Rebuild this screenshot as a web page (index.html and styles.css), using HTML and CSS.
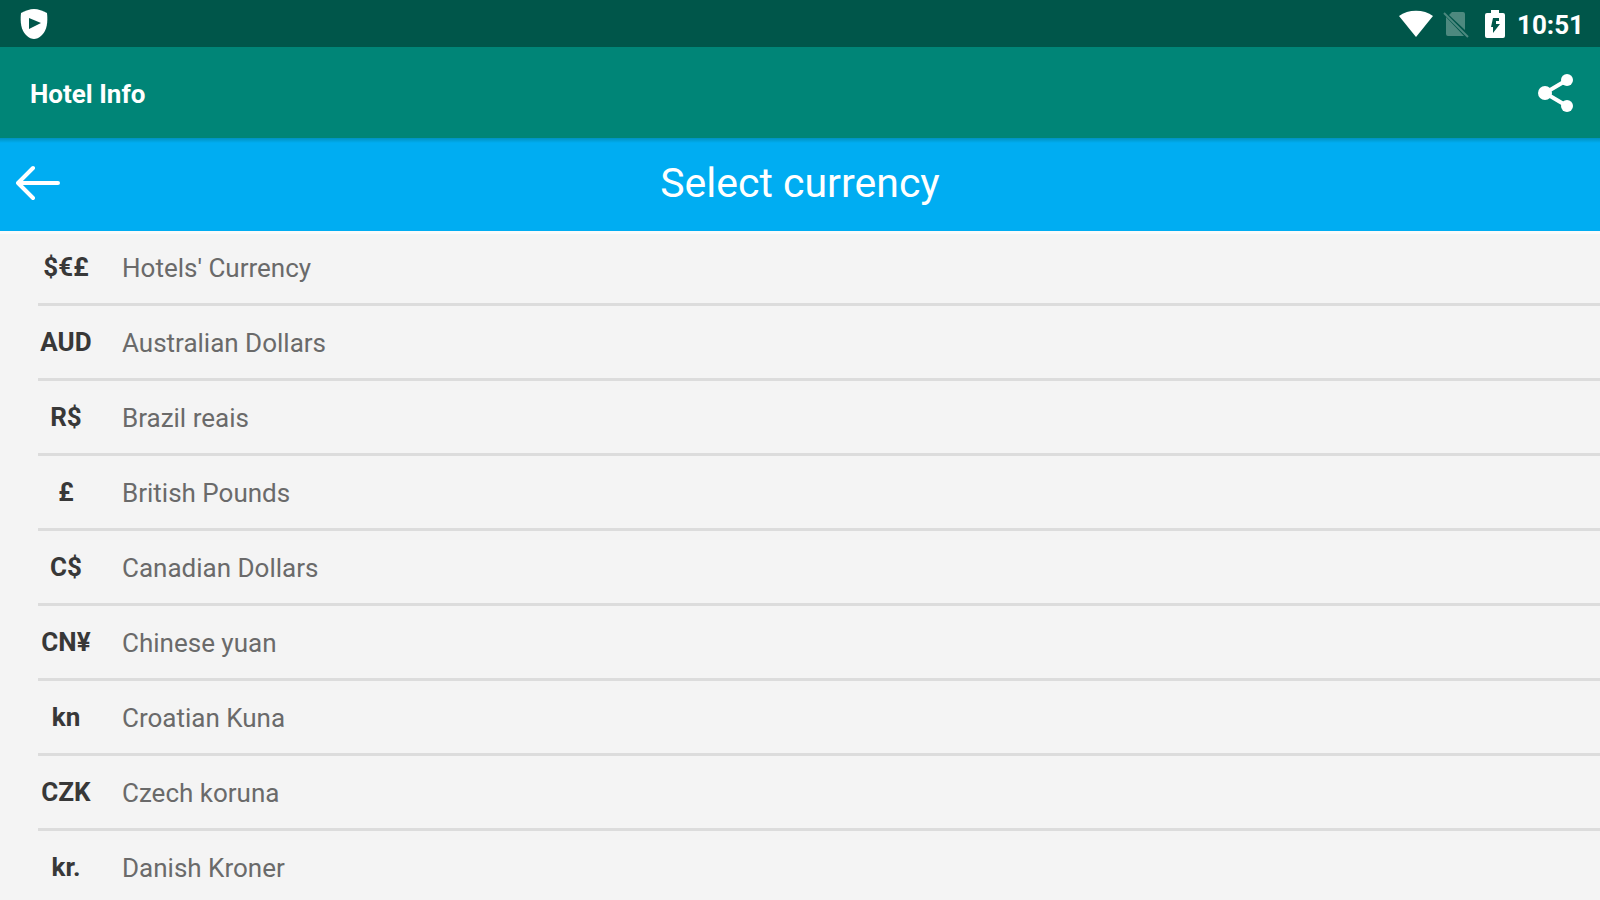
FILE: index.html
```html
<!DOCTYPE html>
<html lang="en">
<head>
    <meta charset="UTF-8">
    <meta name="viewport" content="width=device-width, initial-scale=1.0">
    <title>Hotel Info - Select currency</title>
    <link rel="stylesheet" href="styles.css">
</head>
<body>
    <div class="status-bar">
        <svg class="icon-shield" viewBox="0 0 28 32" aria-hidden="true">
            <path fill="#fff" d="M14 1 C18 1 23 3 27 5 C28 14 27 22 22 27 C19 30 16 31 14 31 C12 31 9 30 6 27 C1 22 0 14 1 5 C5 3 10 1 14 1 Z"/>
            <path fill="#00564a" d="M9 10 L21 15 L9 21 Z"/>
        </svg>
        <div class="status-icons">
            <svg class="icon-wifi" viewBox="0 0 34 28" aria-hidden="true">
                <path fill="#fff" d="M17 27 L0 6 C9 -1 25 -1 34 6 Z"/>
            </svg>
            <svg class="icon-sim" viewBox="0 0 26 28" aria-hidden="true">
                <path fill="#4d897f" d="M9 2 H20 Q22 2 22 4 V20 L6 5 Z M3 7 L21 26 H5 Q3 26 3 24 Z"/>
                <path stroke="#4d897f" stroke-width="2" d="M1 3 L25 27"/>
            </svg>
            <svg class="icon-battery" viewBox="0 0 20 30" aria-hidden="true">
                <path fill="#fff" d="M6 1 H14 V4 H18 Q20 4 20 6 V27 Q20 29 18 29 H2 Q0 29 0 27 V6 Q0 4 2 4 H6 Z"/>
                <path fill="#00564a" d="M8 9 H14 V12 H11 V15 H15 L8 24 V18 H6 Z"/>
            </svg>
            <span class="clock">10:51</span>
        </div>
    </div>

    <header class="app-bar">
        <h1 class="app-title">Hotel Info</h1>
        <button class="icon-button" type="button" aria-label="Share">
            <svg class="icon-share" viewBox="0 0 36 40" aria-hidden="true">
                <path fill="none" stroke="#fff" stroke-width="4" d="M29 7 L7 20 L29 33"/>
                <circle cx="29" cy="7" r="6" fill="#fff"/>
                <circle cx="7" cy="20" r="7" fill="#fff"/>
                <circle cx="29" cy="33" r="6" fill="#fff"/>
            </svg>
        </button>
    </header>

    <div class="page-bar">
        <button class="icon-button" type="button" aria-label="Back">
            <svg class="icon-back" viewBox="0 0 46 36" aria-hidden="true">
                <path fill="none" stroke="#fff" stroke-width="4" stroke-linecap="round" stroke-linejoin="round" d="M17 3 L2 18 L17 33 M2 18 H42"/>
            </svg>
        </button>
        <h2 class="page-title">Select currency</h2>
    </div>

    <main>
        <ul class="currency-list">
            <li><button class="currency" type="button"><span class="code">$€£</span><span class="name">Hotels' Currency</span></button></li>
            <li><button class="currency" type="button"><span class="code">AUD</span><span class="name">Australian Dollars</span></button></li>
            <li><button class="currency" type="button"><span class="code">R$</span><span class="name">Brazil reais</span></button></li>
            <li><button class="currency" type="button"><span class="code">£</span><span class="name">British Pounds</span></button></li>
            <li><button class="currency" type="button"><span class="code">C$</span><span class="name">Canadian Dollars</span></button></li>
            <li><button class="currency" type="button"><span class="code">CN¥</span><span class="name">Chinese yuan</span></button></li>
            <li><button class="currency" type="button"><span class="code">kn</span><span class="name">Croatian Kuna</span></button></li>
            <li><button class="currency" type="button"><span class="code">CZK</span><span class="name">Czech koruna</span></button></li>
            <li><button class="currency" type="button"><span class="code">kr.</span><span class="name">Danish Kroner</span></button></li>
        </ul>
    </main>
</body>
</html>
```
FILE: styles.css
```css
* {
    box-sizing: border-box;
}
body {
    margin: 0;
    height: 100vh;
    display: flex;
    flex-direction: column;
    overflow: hidden;
    background: #f4f4f4;
    font-family: Roboto, sans-serif;
}
button {
    border: none;
    background: none;
    font-family: inherit;
    cursor: pointer;
}
svg {
    display: block;
}
.status-bar {
    flex: none;
    display: flex;
    align-items: center;
    justify-content: space-between;
    height: 47px;
    padding: 1px 16px 0 20px;
    background: #00564a;
}
.status-icons {
    display: flex;
    align-items: center;
}
.icon-shield { width: 28px; height: 32px; }
.icon-wifi { width: 34px; height: 28px; margin-right: 10px; }
.icon-sim { width: 26px; height: 28px; margin-right: 16px; }
.icon-battery { width: 20px; height: 30px; margin-right: 12px; }
.clock {
    padding-top: 2px;
    color: #fff;
    font-size: 26px;
    font-weight: 700;
    line-height: 32px;
}
.app-bar {
    flex: none;
    display: flex;
    align-items: center;
    justify-content: space-between;
    height: 91px;
    padding: 0 26px 0 30px;
    background: #008577;
}
.app-title {
    margin: 0;
    padding-top: 2px;
    color: #fff;
    font-size: 26px;
    font-weight: 700;
}
.icon-button {
    padding: 0;
}
.icon-share { width: 36px; height: 40px; }
.page-bar {
    flex: none;
    display: grid;
    grid-template-columns: 46px 1fr 46px;
    align-items: center;
    height: 93px;
    padding: 0 16px 4px;
    background: linear-gradient(#0092c0, #00adf2 5px);
}
.icon-back { width: 46px; height: 36px; }
.page-title {
    margin: 0;
    color: #fff;
    font-size: 41px;
    font-weight: 400;
    text-align: center;
}
.currency-list {
    margin: 0;
    padding: 0 0 0 38px;
    list-style: none;
    border-top: 3px solid #fafafa;
}
.currency-list li {
    border-bottom: 3px solid #dcdcdc;
}
.currency {
    display: flex;
    align-items: center;
    width: 100%;
    height: 72px;
    padding: 2px 0 0;
    text-align: left;
}
.currency-list li:first-child .currency {
    height: 69px;
    padding: 0 0 2px;
}
.code {
    width: 56px;
    margin-right: 28px;
    padding-bottom: 2px;
    color: #383838;
    font-size: 26px;
    font-weight: 700;
    text-align: center;
}
.name {
    color: #6a6a6a;
    font-size: 26px;
}
```
